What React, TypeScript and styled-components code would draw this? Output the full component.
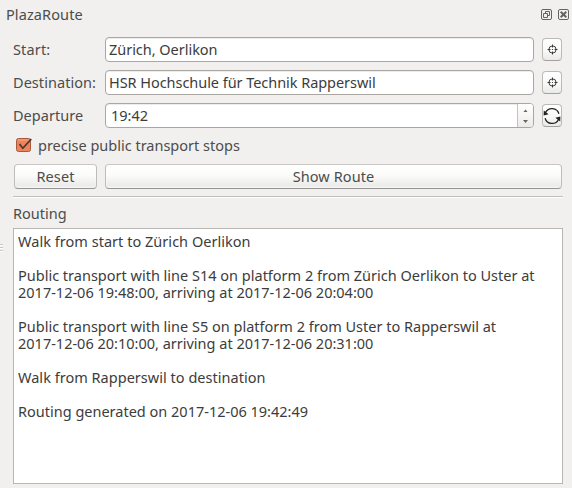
import React from "react";
import styled, { createGlobalStyle } from "styled-components";

const GlobalStyle = createGlobalStyle`
  * { box-sizing: border-box; }
  body { margin: 0; background: #f1f0ee; overflow: hidden; }
`;

const Panel = styled.main`
  position: relative;
  width: 572px;
  height: 488px;
  background: #f1f0ee;
  color: #4c4c4c;
  font: 14.5px/17px "Noto Sans", sans-serif;
  white-space: pre;
`;

const TitleBar = styled.header`
  display: flex;
  align-items: center;
  height: 29px;
  padding: 0 3px 0 6px;
`;

const WindowIcons = styled.div`
  display: flex;
  gap: 6px;
  margin-left: auto;
  svg { display: block; }
`;

const Text = styled.span<{ $spacing?: number }>`
  letter-spacing: ${({ $spacing = 0 }) => $spacing}px;
`;

const Form = styled.section`
  display: grid;
  grid-template-columns: 84px 429px 20px;
  grid-auto-rows: 25px;
  column-gap: 8px;
  row-gap: 8px;
  padding: 8px 0 0 13px;
  align-items: center;
`;

const Field = styled.div<{ $indent?: number }>`
  display: flex;
  align-items: center;
  height: 25px;
  border: 1px solid #aaa7a3;
  border-radius: 4px;
  background: #fff;
  color: #3c3c3c;
  padding-left: ${({ $indent = 3 }) => $indent}px;
  box-shadow: inset 0 1px 0 #eeedeb;
  overflow: hidden;
`;

const Stepper = styled.div`
  display: flex;
  align-items: center;
  justify-content: center;
  width: 16px;
  height: 23px;
  margin-left: auto;
  border-left: 1px solid #c4c2bf;
  background: linear-gradient(#fff, #f6f6f5 50%, #ebeae8);
`;

const IconButton = styled.button`
  display: flex;
  align-items: center;
  justify-content: center;
  width: 20px;
  height: 23px;
  padding: 0;
  border: 1px solid #bcbab7;
  border-bottom-color: #a3a09d;
  border-radius: 4px;
  background: linear-gradient(#fff, #f9f9f8 55%, #eaeae8);
  svg { flex: none; }
`;

const CheckRow = styled.label`
  display: flex;
  align-items: center;
  gap: 6px;
  height: 20px;
  margin-top: 7px;
  margin-bottom: 1px;
  padding-left: 15px;
`;

const Buttons = styled.div`
  display: grid;
  grid-template-columns: 83px 457px;
  gap: 8px;
  padding: 8px 0 0 14px;
`;

const PushButton = styled.button`
  height: 25px;
  padding: 0 0 1px;
  border: 1px solid #bebcb9;
  border-top-color: #c9c7c4;
  border-bottom-color: #969492;
  border-radius: 4px;
  background: linear-gradient(#fff, #fbfbfa 45%, #ebebe9 90%, #f4f4f3);
  box-shadow: inset 0 0 2px #fff;
  color: inherit;
  font: inherit;
`;

const Divider = styled.div`
  width: 550px;
  height: 2px;
  margin: 7px 0 0 13px;
  border-top: 1px solid #c1bfbc;
  border-bottom: 1px solid #fff;
`;

const Heading = styled.div`
  padding: 7px 0 1px 13px;
`;

const Output = styled.div`
  width: 550px;
  height: 256px;
  margin: 5px 0 0 13px;
  padding: 4px;
  border: 1px solid #b9b7b4;
  background: #fff;
  color: #3c3c3c;
`;

const Line = styled.div<{ $spacing?: number }>`
  height: 17px;
  letter-spacing: ${({ $spacing = 0 }) => $spacing}px;
`;

const Grip = styled.svg`
  position: absolute;
  left: 0;
  top: 243px;
`;

const Target = () => (
  <svg width="11" height="11" viewBox="0 0 11 11" fill="none" stroke="#2b2b2b">
    <circle cx="5.5" cy="5.5" r="3.6" strokeWidth=".9" />
    <path d="M5.5 .5v3M5.5 7.5v3M.5 5.5h3M7.5 5.5h3" strokeWidth=".9" />
    <circle cx="5.5" cy="5.5" r=".6" fill="#2b2b2b" stroke="none" />
  </svg>
);

const Refresh = () => (
  <svg width="18" height="18" viewBox="0 0 18 18" fill="none" stroke="#222" strokeWidth="1.3">
    <path d="M2.4 5.8A7.2 7.2 0 0 1 15.9 6.8M15.6 12.2A7.2 7.2 0 0 1 2.1 11.2" />
    <path d="M.8 3.6.6 8.4 5.6 7.2zM17.2 14.4l.2-4.8-5 1.2z" fill="#222" stroke="none" />
  </svg>
);

const report: [string, number][] = [
  ["Walk from start to Zürich Oerlikon", 0.03],
  ["", 0],
  ["Public transport with line S14 on platform 2 from Zürich Oerlikon to Uster at", 0],
  ["2017-12-06 19:48:00, arriving at 2017-12-06 20:04:00", 0],
  ["", 0],
  ["Public transport with line S5 on platform 2 from Uster to Rapperswil at", 0],
  ["2017-12-06 20:10:00, arriving at 2017-12-06 20:31:00", 0],
  ["", 0],
  ["Walk from Rapperswil to destination", 0.02],
  ["", 0],
  ["Routing generated on 2017-12-06 19:42:49", 0],
];

export default function App() {
  return (
    <>
      <GlobalStyle />
      <Panel>
        <TitleBar>
          <Text $spacing={0.1}>PlazaRoute</Text>
          <WindowIcons>
            <svg width="11" height="11" fill="none" stroke="#666461">
              <rect x=".5" y=".5" width="10" height="10" rx="1.5" />
              <path d="M4.5 4V2.5h4v4H7M2.5 4.5h4v4h-4z" />
            </svg>
            <svg width="11" height="11" fill="none" stroke="#666461">
              <rect x=".5" y=".5" width="10" height="10" rx="1.5" />
              <path d="m2.7 2.7 5.6 5.6m0-5.6L2.7 8.3" strokeWidth="2" />
            </svg>
          </WindowIcons>
        </TitleBar>
        <Form>
          <Text $spacing={0.15}>Start:</Text>
          <Field><Text $spacing={-0.03}>Zürich, Oerlikon</Text></Field>
          <IconButton aria-label="Pick start"><Target /></IconButton>
          <Text $spacing={0.05}>Destination:</Text>
          <Field><Text $spacing={-0.05}>HSR Hochschule für Technik Rapperswil</Text></Field>
          <IconButton aria-label="Pick destination"><Target /></IconButton>
          <Text $spacing={0.03}>Departure</Text>
          <Field $indent={5}>
            <Text>19:42</Text>
            <Stepper>
              <svg width="7" height="17" fill="#666461">
                <path d="M1.5 5 3.5 2.5 5.5 5zM1 13h5l-2.5 3z" />
              </svg>
            </Stepper>
          </Field>
          <IconButton aria-label="Refresh time"><Refresh /></IconButton>
        </Form>
        <CheckRow>
          <svg width="17" height="16" viewBox="0 0 17 16">
            <rect x="1.5" y="1.5" width="14" height="13" rx="2" fill="#ee8258" stroke="#a65a3e" />
            <path d="M3 3h11" stroke="#f7a989" />
            <path d="m4.5 7 3.3 4.3L16.3 2" fill="none" stroke="#4a3730" strokeWidth="1.7" />
          </svg>
          <Text>precise public transport stops</Text>
        </CheckRow>
        <Buttons>
          <PushButton><Text $spacing={0.1}>Reset</Text></PushButton>
          <PushButton><Text $spacing={0.1}>Show Route</Text></PushButton>
        </Buttons>
        <Divider />
        <Heading><Text>Routing</Text></Heading>
        <Output>
          {report.map(([line, spacing], i) => <Line key={i} $spacing={spacing}>{line}</Line>)}
        </Output>
        <Grip width="4" height="10" stroke="#c9c7c4">
          <path d="M0 1.5h3M0 4.5h3M0 7.5h3" />
          <path d="M0 2.5h3M0 5.5h3M0 8.5h3" stroke="#fff" />
        </Grip>
      </Panel>
    </>
  );
}
